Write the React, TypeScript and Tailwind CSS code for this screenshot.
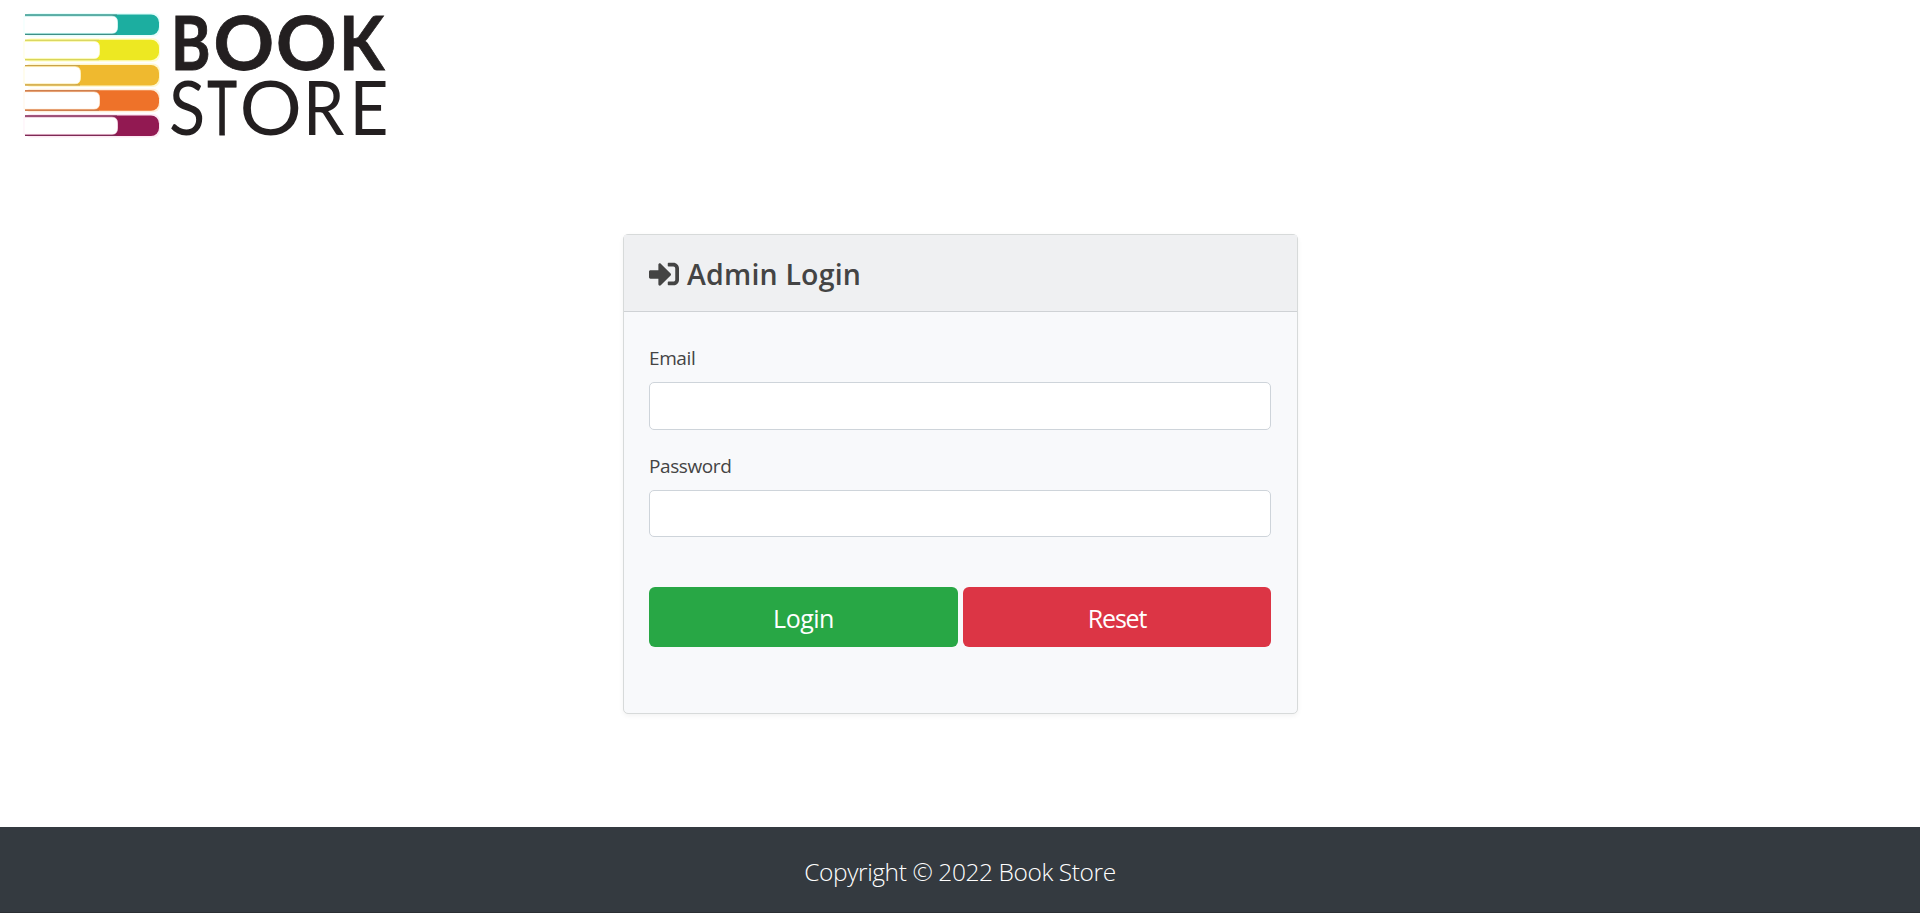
import { FaSignInAlt } from "react-icons/fa";

const books = [
  { y: 14.5, color: "#1caea0", edge: "#3f8f86", page: 117, halo: "#e6fffc" },
  { y: 39.7, color: "#ede822", edge: "#d8d45a", page: 99, halo: "#fffed0" },
  { y: 65, color: "#efb92f", edge: "#c9a24a", page: 80, halo: "#fff8cf" },
  { y: 90.3, color: "#ee7229", edge: "#c47a4c", page: 99, halo: "#fff0dc" },
  { y: 115.5, color: "#921952", edge: "#7d2a55", page: 117, halo: "#fdeaf4" },
];

const bold = [
  { c: "B", x: 171, w: 0.8, s: 1 },
  { c: "O", x: 213.5, w: 1, s: 0.8 },
  { c: "O", x: 276, w: 1, s: 0.8 },
  { c: "K", x: 339, w: 0.88, s: 0.8 },
];

const thin = [
  { c: "S", x: 169, w: 0.89, s: 0 },
  { c: "T", x: 207.3, w: 0.67, s: 0.9 },
  { c: "O", x: 239.5, w: 1.04, s: 0 },
  { c: "R", x: 303, w: 0.88, s: 0 },
  { c: "E", x: 349.4, w: 0.9, s: 0 },
];

function Logo() {
  return (
    <svg className="block" width="400" height="150" viewBox="0 0 400 150" role="img" aria-label="Book Store">
      {books.map((b) => (
        <g key={b.y}>
          <rect x="24" y={b.y - 1.5} width="136" height="23.5" rx="7" fill={b.halo} />
          <path d={`M25 ${b.y}H151a8 8 0 0 1 8 8v4.5a8 8 0 0 1-8 8H25z`} fill={b.color} />
          <path d={`M25 ${b.y + 0.6}H${b.page}M25 ${b.y + 19.9}H${b.page}`} stroke={b.edge} strokeWidth="1.2" />
          <path
            d={`M24 ${b.y + 1.7}H${b.page - 5}q5.5 0 5.5 6v5q0 6-5.5 6H24z`}
            fill="#fff"
            stroke={b.halo}
            strokeWidth="0.7"
          />
        </g>
      ))}
      <g fill="#231f20" stroke="#231f20" fontFamily="Lato, sans-serif" fontSize="75">
        {bold.map((l, i) => (
          <text key={i} transform={`translate(${l.x} 69.5) scale(${l.w} 1)`} fontWeight="700" strokeWidth={l.s}>{l.c}</text>
        ))}
        {thin.map((l, i) => (
          <text key={i} transform={`translate(${l.x} 135) scale(${l.w} 1)`} fontWeight="400" strokeWidth={l.s}>{l.c}</text>
        ))}
      </g>
    </svg>
  );
}

function Field({ label, type, box }: { label: string; type: string; box: string }) {
  return (
    <label className="block">
      <span className="block h-[30px] text-[19px] leading-[30px] tracking-[-0.4px]">{label}</span>
      <input type={type} className={`mt-[9px] block w-full rounded-[5px] border border-[#ced4da] bg-white px-4 outline-none ${box}`} />
    </label>
  );
}

export default function App() {
  return (
    <div className="flex h-[913px] w-full flex-col bg-white font-['Open_Sans','Noto_Sans',sans-serif] text-[#444]">
      <header className="h-[234px]">
        <Logo />
      </header>
      <main className="flex flex-1 items-start justify-center pl-px">
        <section className="h-[480px] w-[675px] rounded-[5px] border border-[#d7dada] bg-[#f8f9fb] shadow-[0_2px_5px_rgba(0,0,0,0.05)]">
          <div className="flex h-[77px] items-center border-b border-[#cfd2d5] bg-[#eff0f2] pl-[25px]">
            <FaSignInAlt className="mt-[2px] h-[30px] w-[30px]" />
            <h1 className="ml-[8px] mt-[3px] text-[28.5px] font-semibold tracking-[0.2px]">Admin Login</h1>
          </div>
          <form className="pl-[25px] pr-[26px] pt-[31px]">
            <Field label="Email" type="email" box="h-[48px]" />
            <div className="mt-[21px]">
              <Field label="Password" type="password" box="h-[47px]" />
            </div>
            <div className="mt-[50px] flex gap-[5px] text-[25px] text-white">
              <button type="button" className="h-[60px] w-[309px] rounded-[6px] bg-[#28a745] pt-[3px] tracking-[-0.5px]">Login</button>
              <button type="button" className="h-[60px] flex-1 rounded-[6px] bg-[#dc3545] pt-[3px] tracking-[-1.2px]">Reset</button>
            </div>
          </form>
        </section>
      </main>
      <footer className="flex h-[86px] items-center justify-center border-b border-[#2b2f33] bg-[#343a40] pt-[5px] text-[24.5px] font-light tracking-[-0.41px] text-white">
        Copyright © 2022 Book Store
      </footer>
    </div>
  );
}
